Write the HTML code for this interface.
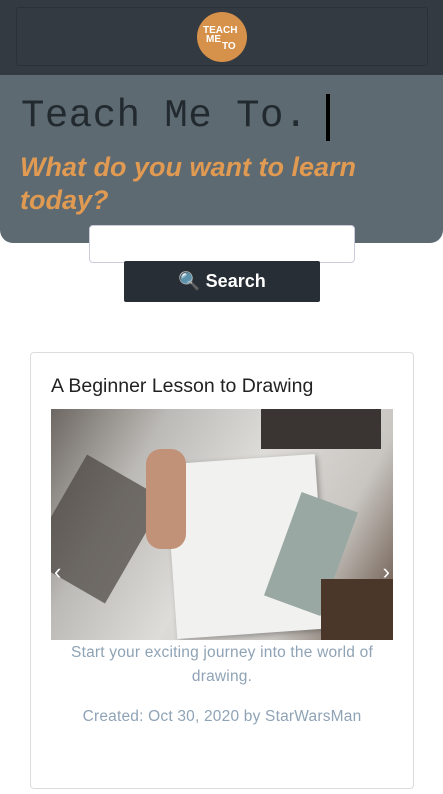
<!DOCTYPE html>
<html><head><style>
body{margin:0;width:443px;height:794px;background:#fff;font-family:"Liberation Sans",sans-serif;position:relative;overflow:hidden}
.hdr{position:absolute;left:0;top:0;width:443px;height:75px;background:#343a41}
.hdrb{position:absolute;left:16px;top:7px;width:410px;height:57px;border:1px solid #2c3137;border-radius:3px}
.logo{position:absolute;left:197px;top:12px;width:50px;height:50px;border-radius:50%;background:#d6914a;color:#fff;font-weight:bold;font-size:10px;line-height:9px}
.hero{position:absolute;left:0;top:75px;width:443px;height:168px;background:#5e6a72;border-radius:0 0 13px 13px}
.t1{position:absolute;left:21px;top:94px;font-family:"Liberation Mono",monospace;font-size:39px;color:#222a30;letter-spacing:0.5px}
.cur{position:absolute;left:326px;top:94px;width:4px;height:47px;background:#000}
.t2{position:absolute;left:20px;top:151px;width:400px;font-size:27px;font-style:italic;font-weight:bold;color:#e09a52;line-height:33px}
.inp{position:absolute;left:89px;top:225px;width:264px;height:36px;background:#fff;border:1px solid #ccd;border-radius:4px}
.btn{position:absolute;left:124px;top:261px;width:196px;height:41px;background:#272e35;border-radius:2px;color:#fff;font-weight:bold;font-size:18px;text-align:center;line-height:41px}
.card{position:absolute;left:30px;top:352px;width:382px;height:435px;border:1px solid #dcdcdc;border-radius:4px}
.ct{position:absolute;left:20px;top:22px;font-size:19.5px;color:#222}
.img{position:absolute;left:20px;top:56px;width:342px;height:231px;background:linear-gradient(120deg,#6d6763 0%,#bcbab6 25%,#dedcd8 50%,#c9c6c2 75%,#5a4536 100%);overflow:hidden}
.txt{position:absolute;left:20px;width:342px;text-align:center;color:#8fa3b6;font-size:15.5px;line-height:24px;letter-spacing:0.2px}
</style></head><body>
<div class="hdr"><div class="hdrb"></div>
<div class="logo"><div style="position:absolute;left:6px;top:14px">TEACH</div><div style="position:absolute;left:9px;top:23px">ME</div><div style="position:absolute;left:25px;top:30px">TO</div></div></div>
<div class="hero"></div>
<div class="t1">Teach Me To.</div><div class="cur"></div>
<div class="t2">What do you want to learn today?</div>
<div class="inp"></div>
<div class="btn">🔍 Search</div>
<div class="card"><div class="ct">A Beginner Lesson to Drawing</div>
<div class="img">
<div style="position:absolute;left:210px;top:0;width:120px;height:40px;background:#3a3533"></div>
<div style="position:absolute;left:120px;top:50px;width:150px;height:175px;background:#f1f1ef;transform:rotate(-4deg);box-shadow:2px 2px 6px rgba(0,0,0,.3)"></div>
<div style="position:absolute;left:230px;top:90px;width:60px;height:110px;background:#9aa8a4;transform:rotate(20deg)"></div>
<div style="position:absolute;left:0;top:60px;width:90px;height:120px;background:#4a4440;transform:rotate(30deg);opacity:.7"></div>
<div style="position:absolute;left:95px;top:40px;width:40px;height:100px;background:#c29278;border-radius:15px"></div>
<div style="position:absolute;left:270px;top:170px;width:72px;height:61px;background:#4b3729"></div>
<div style="position:absolute;left:3px;top:150px;color:#fff;font-size:22px">‹</div>
<div style="position:absolute;right:3px;top:150px;color:#fff;font-size:22px">›</div>
</div>
<div class="txt" style="top:288px">Start your exciting journey into the world of drawing.</div>
<div class="txt" style="top:352px">Created: Oct 30, 2020 by StarWarsMan</div>
</div>
</body></html>
